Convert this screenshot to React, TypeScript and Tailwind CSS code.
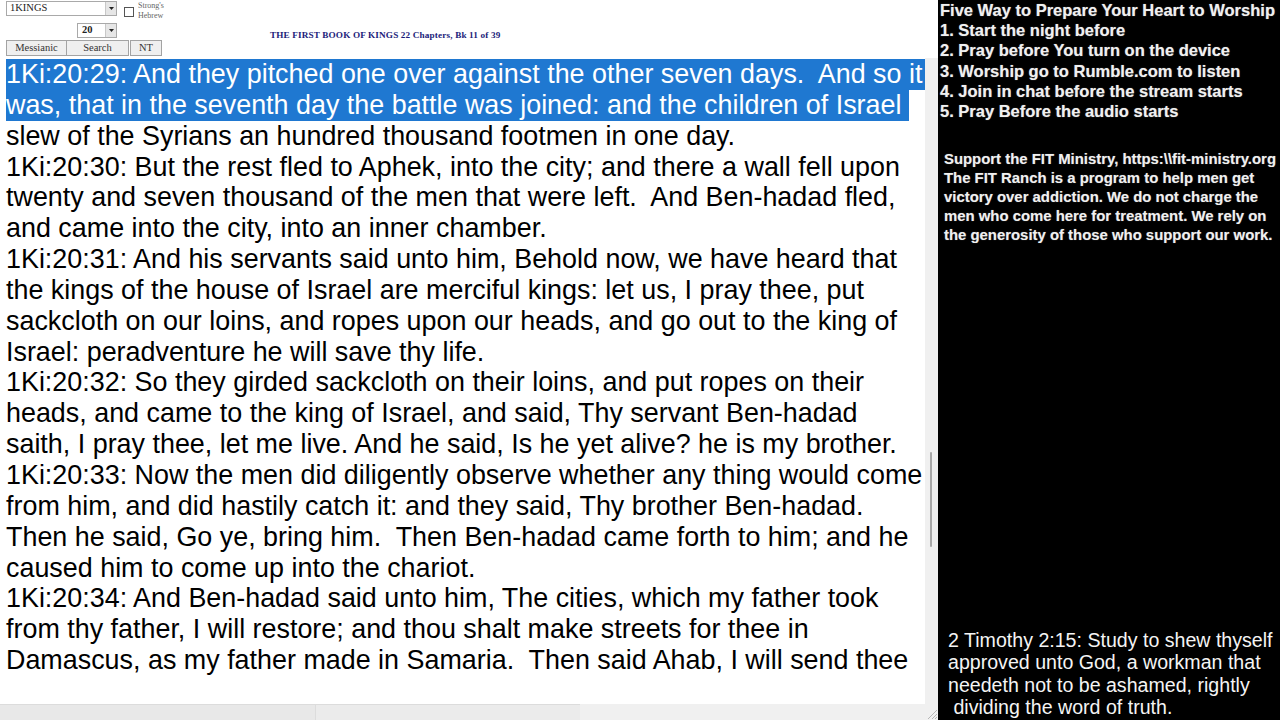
import React from 'react'

const serif = { fontFamily: '"Liberation Serif", "DejaVu Serif", serif' }
const sans = { fontFamily: '"Liberation Sans", Arial, sans-serif' }

const verseLines = [
  { text: '1Ki:20:29: And they pitched one over against the other seven days.  And so it ', sel: true },
  { text: 'was, that in the seventh day the battle was joined: and the children of Israel ', sel: true },
  { text: 'slew of the Syrians an hundred thousand footmen in one day.' },
  { text: '1Ki:20:30: But the rest fled to Aphek, into the city; and there a wall fell upon' },
  { text: 'twenty and seven thousand of the men that were left.  And Ben-hadad fled,' },
  { text: 'and came into the city, into an inner chamber.' },
  { text: '1Ki:20:31: And his servants said unto him, Behold now, we have heard that' },
  { text: 'the kings of the house of Israel are merciful kings: let us, I pray thee, put' },
  { text: 'sackcloth on our loins, and ropes upon our heads, and go out to the king of' },
  { text: 'Israel: peradventure he will save thy life.' },
  { text: '1Ki:20:32: So they girded sackcloth on their loins, and put ropes on their' },
  { text: 'heads, and came to the king of Israel, and said, Thy servant Ben-hadad' },
  { text: 'saith, I pray thee, let me live. And he said, Is he yet alive? he is my brother.' },
  { text: '1Ki:20:33: Now the men did diligently observe whether any thing would come' },
  { text: 'from him, and did hastily catch it: and they said, Thy brother Ben-hadad.' },
  { text: 'Then he said, Go ye, bring him.  Then Ben-hadad came forth to him; and he' },
  { text: 'caused him to come up into the chariot.' },
  { text: '1Ki:20:34: And Ben-hadad said unto him, The cities, which my father took' },
  { text: 'from thy father, I will restore; and thou shalt make streets for thee in' },
  { text: 'Damascus, as my father made in Samaria.  Then said Ahab, I will send thee' },
]

const steps = [
  'Five Way to Prepare Your Heart to Worship',
  '1. Start the night before',
  '2. Pray before You turn on the device',
  '3. Worship go to Rumble.com to listen',
  '4. Join in chat before the stream starts',
  '5. Pray Before the audio starts',
]

const support = [
  'Support the FIT Ministry, https:\\\\fit-ministry.org',
  'The FIT Ranch is a program to help men get',
  'victory over addiction. We do not charge the',
  'men who come here for treatment. We rely on',
  'the generosity of those who support our work.',
]

const timothy = [
  '2 Timothy 2:15: Study to shew thyself',
  'approved unto God, a workman that',
  'needeth not to be ashamed, rightly',
  ' dividing the word of truth.',
]

function DropArrow() {
  return (
    <div className="flex h-full w-[11px] items-center justify-center border-l border-[#c8c8c8] bg-[#e6e6e6]">
      <svg width="5" height="3" viewBox="0 0 5 3">
        <path d="M0 0h5L2.5 3z" fill="#222" />
      </svg>
    </div>
  )
}

function Controls() {
  return (
    <div className="flex flex-col gap-[2px] pl-[6px] pt-[1px]" style={serif}>
      {/* book select + strong's checkbox */}
      <div className="flex items-start">
        <div className="flex h-[15px] w-[111px] items-center justify-between border border-[#a9a9a9] bg-white pl-[3px]">
          <span className="text-[10.5px] leading-none text-[#222]">1KINGS</span>
          <DropArrow />
        </div>
        <div className="ml-[7px] mt-[6px] h-[10px] w-[10px] border border-[#555] bg-white" />
        <div className="ml-[4px] text-[8px] leading-[10px] text-[#666]">
          Strong's
          <br />
          Hebrew
        </div>
      </div>
      {/* chapter select */}
      <div className="ml-[71px] flex h-[15px] w-[40px] items-center justify-between border border-[#a9a9a9] bg-white pl-[4px]">
        <span className="text-[10.5px] font-bold leading-none text-[#222]">20</span>
        <DropArrow />
      </div>
      {/* buttons */}
      <div className="flex h-[16px]">
        <button className="w-[61px] border border-[#a3a3a3] bg-[#efefef] text-[10.5px] leading-none text-[#333]">Messianic</button>
        <button className="w-[62px] border border-l-0 border-[#a3a3a3] bg-[#efefef] text-[10.5px] leading-none text-[#333]">Search</button>
        <button className="ml-[1px] w-[32px] border border-[#a3a3a3] bg-[#efefef] text-[10.5px] leading-none text-[#333]">NT</button>
      </div>
    </div>
  )
}

function ResizeGrip() {
  return (
    <svg width="13" height="16" viewBox="0 0 13 16" className="block">
      <path d="M12 6L3 15M12 10L7 15M12 13L10 15" stroke="#b5b5b5" strokeWidth="1" />
    </svg>
  )
}

export default function App() {
  return (
    <div className="flex h-[720px] w-[1280px] overflow-hidden bg-white">
      {/* Bible reader */}
      <div className="flex w-[938px] flex-col bg-white">
        <header className="flex h-[58px] items-start">
          <Controls />
          <div className="ml-[106px] mt-[30px] text-[9.2px] font-bold leading-[10px] tracking-[0.15px] text-[#1c1c7a]" style={serif}>
            THE FIRST BOOK OF KINGS 22 Chapters, Bk 11 of 39
          </div>
        </header>

        <div className="flex flex-1">
          <div className="w-[925px] pl-[6px] pt-px text-[26.9px] leading-[30.85px] text-black" style={sans}>
            {verseLines.map((line, i) => (
              <div key={i} className="h-[30.85px] whitespace-pre">
                {line.sel ? <span className="inline-block h-[30.85px] bg-[#1f78d1] text-white">{line.text}</span> : line.text}
              </div>
            ))}
          </div>
          <div className="relative w-[13px] bg-[#f0f0f0]">
            <div className="absolute left-[5px] top-[394px] h-[95px] w-[2px] rounded-full bg-[#a8a8a8]" />
          </div>
        </div>

        <div className="flex h-[16px] bg-[#f0f0f0]">
          <div className="w-[316px] border-r border-t border-[#dcdcdc] bg-[#e8e8e8]" />
          <div className="w-[264px] border-t border-[#dcdcdc] bg-[#ebebeb]" />
          <div className="flex-1" />
          <ResizeGrip />
        </div>
      </div>

      {/* Side panel */}
      <aside className="flex flex-1 flex-col bg-black text-white" style={sans}>
        <div className="pl-[2px] text-[16.5px] font-bold leading-[20.2px] text-[#f0f0f0] [text-shadow:0_0_1px_rgba(255,255,255,0.5)]">
          {steps.map((s) => (
            <div key={s} className="whitespace-pre">{s}</div>
          ))}
        </div>
        <div className="mt-[29px] pl-[6px] text-[14.9px] font-bold leading-[19px] text-[#f0f0f0] [text-shadow:0_0_1px_rgba(255,255,255,0.4)]">
          {support.map((s) => (
            <div key={s} className="whitespace-pre">{s}</div>
          ))}
        </div>
        <div className="mt-auto pb-px pl-[10px] text-[19.6px] leading-[22.6px] text-[#f4f4f4]">
          {timothy.map((s) => (
            <div key={s} className="whitespace-pre">{s}</div>
          ))}
        </div>
      </aside>
    </div>
  )
}
